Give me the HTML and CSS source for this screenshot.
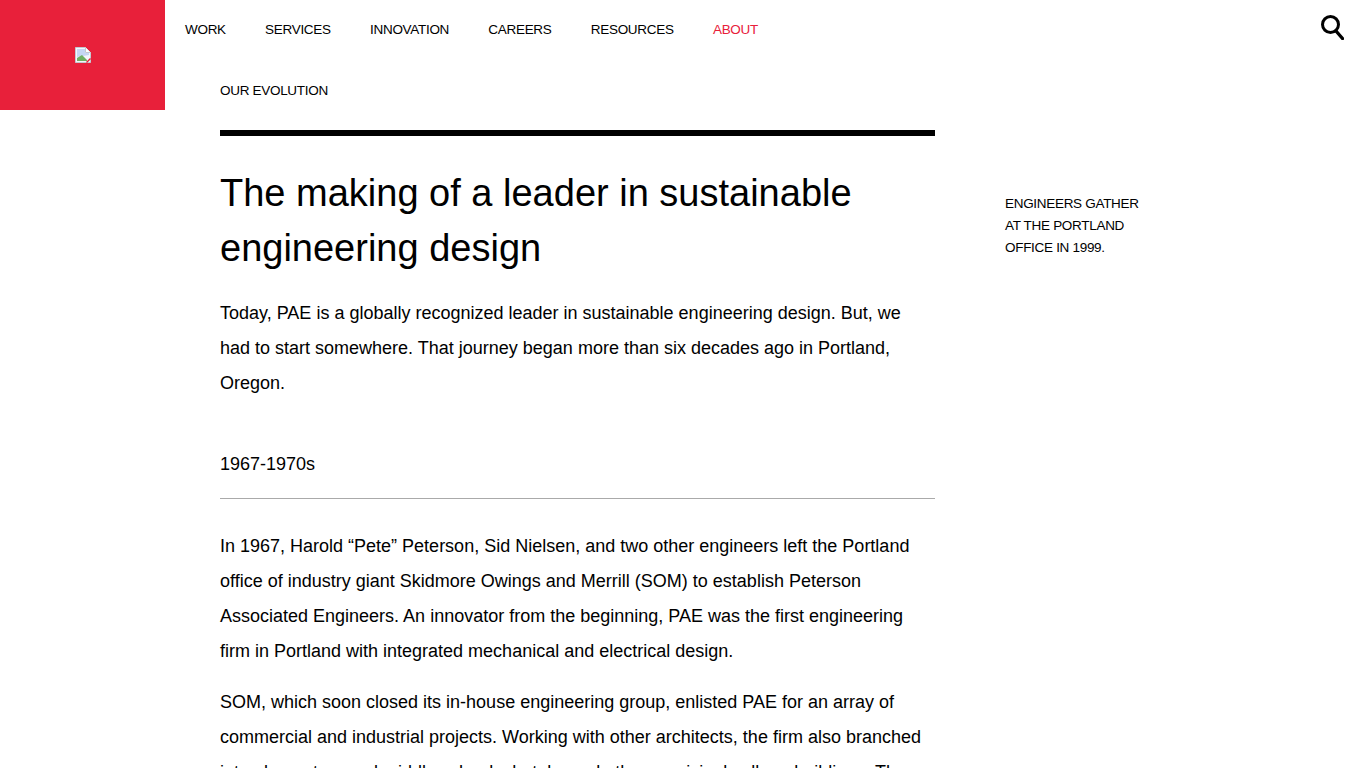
FILE: index.html
```html
<!DOCTYPE html>
<html lang="en">
<head>
  <meta charset="UTF-8" />
  <title>Our Evolution | PAE</title>
  <link rel="stylesheet" href="styles.css">
</head>
<body>
  <div class="logo">
    <svg class="brokenImg" width="16" height="16" viewBox="0 0 16 16">
      <path d="M0.5 0.5H10.5L15.5 5.5V15.5H0.5Z" fill="#f4f6fb" stroke="#c4c8d0" />
      <path d="M2 2H10V6H14V8L2 10Z" fill="#c6d6f4" />
      <path d="M2 14V11L7 8L12 13V14Z" fill="#6fb062" />
      <path d="M10.5 0.5V5.5H15.5" fill="#fff" stroke="#c4c8d0" />
      <path d="M11 15L15 11L16 12L12 16Z" fill="#e8203a" />
    </svg>
  </div>

  <div class="rightCol">
    <nav class="mainNav">
      <a href="#">WORK</a>
      <a href="#">SERVICES</a>
      <a href="#">INNOVATION</a>
      <a href="#">CAREERS</a>
      <a href="#">RESOURCES</a>
      <a href="#" class="active">ABOUT</a>
      <a href="#" class="searchBtn" aria-label="Search">
        <svg width="24" height="26" viewBox="0 0 24 26">
          <circle cx="10.5" cy="10.5" r="8" fill="none" stroke="#000" stroke-width="3" />
          <path d="M16 17L22.5 24.5" stroke="#000" stroke-width="3.4" stroke-linecap="round" />
        </svg>
      </a>
    </nav>

    <div class="content">
      <article class="story">
        <div class="eyebrow">OUR EVOLUTION</div>
        <h1>The making of a leader in sustainable engineering design</h1>
        <p>Today, PAE is a globally recognized leader in sustainable engineering design. But, we had to start somewhere. That journey began more than six decades ago in Portland, Oregon.</p>

        <h2>1967-1970s</h2>
        <p>In 1967, Harold “Pete” Peterson, Sid Nielsen, and two other engineers left the Portland office of industry giant Skidmore Owings and Merrill (SOM) to establish Peterson Associated Engineers. An innovator from the beginning, PAE was the first engineering firm in Portland with integrated mechanical and electrical design.</p>
        <p>SOM, which soon closed its in-house engineering group, enlisted PAE for an array of commercial and industrial projects. Working with other architects, the firm also branched into elementary and middle schools, hotels, and other municipal college buildings. The</p>
      </article>

      <aside class="caption">ENGINEERS GATHER<br />AT THE PORTLAND<br />OFFICE IN 1999.</aside>
    </div>
  </div>
</body>
</html>
```

FILE: styles.css
```css
html, body {
  height: 768px;
  overflow: hidden;
}

body {
  margin: 0;
  display: flex;
  font-family: "Liberation Sans", Arial, sans-serif;
  color: #000;
  background: #fff;
}

.logo {
  flex: 0 0 165px;
  height: 110px;
  background-color: #e8203a;
  display: flex;
  justify-content: center;
  align-items: center;
}

.brokenImg {
  display: block;
}

.rightCol {
  flex: 1;
  min-width: 0;
}

.mainNav {
  height: 58px;
  padding: 0 22px 0 20px;
  display: flex;
  align-items: center;
  gap: 39.3px;
  font-size: 13.5px;
  letter-spacing: -0.3px;
}

.mainNav a {
  color: #000;
  text-decoration: none;
}

.mainNav a.active {
  color: #e8203a;
}

.mainNav .searchBtn {
  margin-left: auto;
  align-self: flex-start;
  margin-top: 14px;
  display: flex;
}

.content {
  display: flex;
  padding-left: 55px;
}

.story {
  flex: 0 0 715px;
}

.eyebrow {
  font-size: 13.5px;
  letter-spacing: -0.3px;
  line-height: 16px;
  padding: 25px 0 31px;
}

h1 {
  margin: 0 0 20px;
  padding-top: 30px;
  border-top: 6px solid #000;
  font-size: 38px;
  font-weight: 400;
  line-height: 55px;
}

h2 {
  margin: 46px 0 30px;
  padding-bottom: 16px;
  border-bottom: 1px solid #aaa;
  font-size: 18px;
  font-weight: 400;
  line-height: 35px;
}

p {
  margin: 0 0 16px;
  font-size: 18px;
  line-height: 35px;
}

.caption {
  margin: 135px 0 0 70px;
  font-size: 13.5px;
  letter-spacing: -0.3px;
  line-height: 22px;
}
```
